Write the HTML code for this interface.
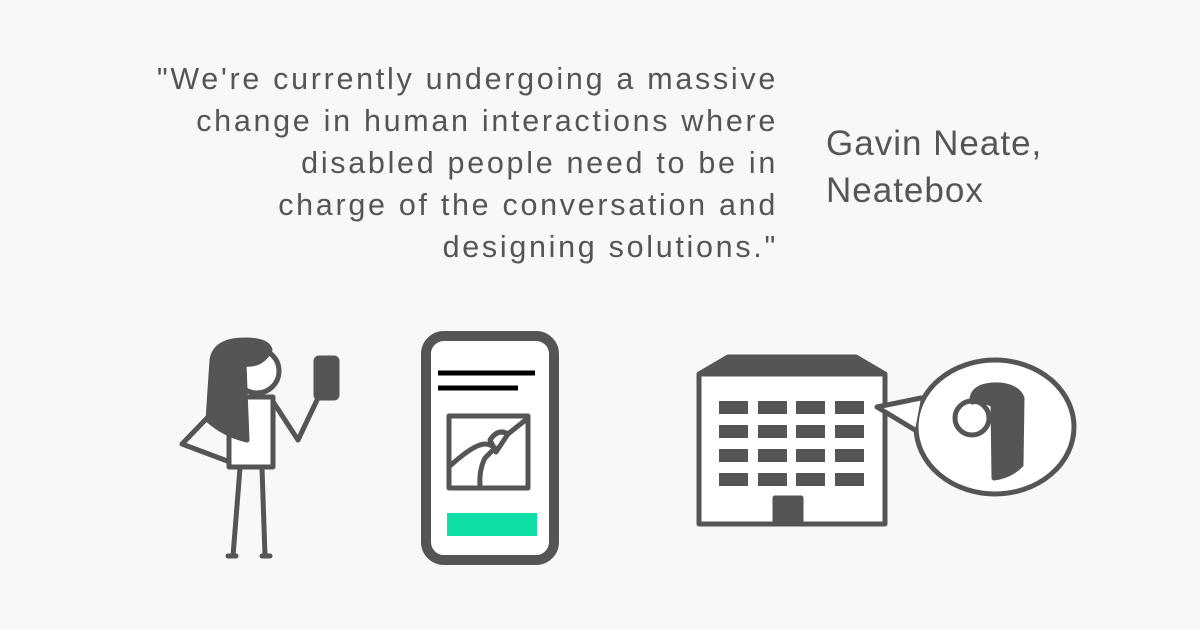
<!DOCTYPE html>
<html><head><style>
body{margin:0;width:1200px;height:630px;background:#f8f8f8;overflow:hidden;position:relative;font-family:"Liberation Sans",sans-serif;color:#555}
.q{position:absolute;right:422px;top:58px;text-align:right;font-size:30.5px;line-height:42px;letter-spacing:2.7px;white-space:nowrap}
.a{position:absolute;left:826px;top:120px;font-size:35px;line-height:47px;letter-spacing:1px}
svg{position:absolute;left:0;top:0}
</style></head><body>
<div class="q">"We're currently undergoing a massive<br>change in human interactions where<br>disabled people need to be in<br>charge of the conversation and<br>designing solutions."</div>
<div class="a">Gavin Neate,<br>Neatebox</div>
<svg width="1200" height="630" viewBox="0 0 1200 630">
<g stroke="#555" stroke-width="5" fill="none" stroke-linejoin="round" stroke-linecap="round">
<polyline points="210,415 182,444 230,462"/>
<polyline points="272,400 298,440 318,398"/>
<line x1="240" y1="468" x2="233" y2="556"/><line x1="262" y1="468" x2="265" y2="556"/>
<line x1="228" y1="556" x2="236" y2="556"/><line x1="262" y1="556" x2="270" y2="556"/>
<rect x="229" y="397" width="44" height="70" fill="#fff"/>
<circle cx="257" cy="371" r="22" fill="#fff"/>
<path d="M212,360 Q215,340 245,340 Q268,340 270,350 Q262,366 244,364 L247,440 Q225,435 208,420 Z" fill="#555"/>
<rect x="316" y="358" width="21" height="40" rx="3" fill="#555"/>
<rect x="426" y="336" width="128" height="224" rx="18" fill="#fff" stroke-width="10"/>
<rect x="449" y="416" width="79" height="72" fill="#fff"/>
<path d="M451,465 Q470,448 480,445 Q488,442 495,448 L485,458 Q479,470 480,485"/>
<path d="M490,440 Q498,428 508,434 L496,452 Z M508,434 L528,418"/>
<rect x="699" y="374" width="186" height="150" fill="#fff"/>
<path d="M728,357 L856,357 L885,374 L699,374 Z" fill="#555"/>
<rect x="775" y="498" width="26" height="26" fill="#555"/>
<ellipse cx="995" cy="427" rx="79" ry="67" fill="#fff"/>
<path d="M921,398 L877,407 L915,430" fill="#fff"/>
<circle cx="972" cy="418" r="17" fill="#fff"/>
<path d="M972,398 Q975,384 1000,385 Q1018,387 1022,398 L1021,465 Q1010,476 994,478 L993,405 Q985,400 972,402 Z" fill="#555"/>
</g>
<line x1="438" y1="373" x2="535" y2="373" stroke="#000" stroke-width="5"/>
<line x1="438" y1="388" x2="518" y2="388" stroke="#000" stroke-width="5"/>
<rect x="447" y="513" width="90" height="23" fill="#10dfa5"/>
<g fill="#555">
<rect x="719" y="401" width="29" height="13"/><rect x="758" y="401" width="29" height="13"/><rect x="796" y="401" width="29" height="13"/><rect x="835" y="401" width="29" height="13"/>
<rect x="719" y="425" width="29" height="13"/><rect x="758" y="425" width="29" height="13"/><rect x="796" y="425" width="29" height="13"/><rect x="835" y="425" width="29" height="13"/>
<rect x="719" y="449" width="29" height="13"/><rect x="758" y="449" width="29" height="13"/><rect x="796" y="449" width="29" height="13"/><rect x="835" y="449" width="29" height="13"/>
<rect x="719" y="473" width="29" height="13"/><rect x="758" y="473" width="29" height="13"/><rect x="796" y="473" width="29" height="13"/><rect x="835" y="473" width="29" height="13"/>
</g>
</svg>
</body></html>
